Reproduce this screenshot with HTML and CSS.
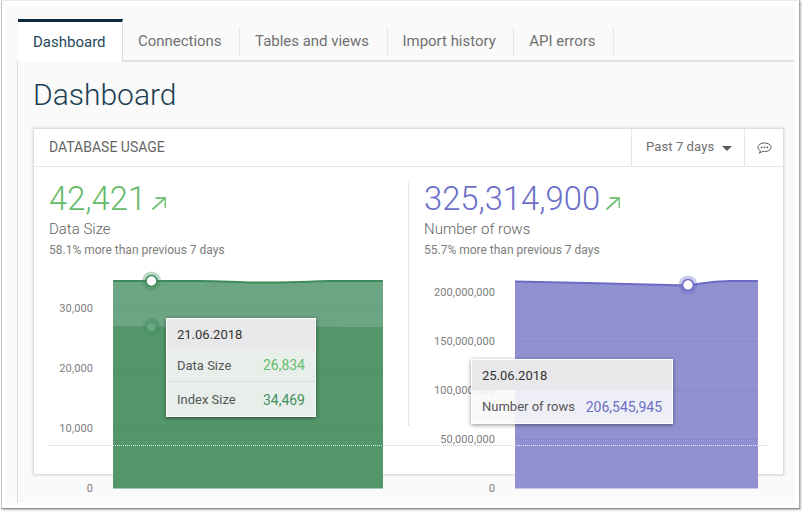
FILE: index.html
```html
<!DOCTYPE html>
<html lang="en">
<head>
<meta charset="utf-8">
<title>Dashboard</title>
<link rel="stylesheet" href="styles.css">
</head>
<body>
<div class="window">
  <div class="panel">
    <div class="content">
      <nav class="tabs">
        <a class="tab tab-active">Dashboard</a>
        <a class="tab">Connections</a>
        <a class="tab">Tables and views</a>
        <a class="tab">Import history</a>
        <a class="tab">API errors</a>
      </nav>
      <h1 class="title">Dashboard</h1>
      <section class="card">
        <header class="card-head">
          <h2 class="card-title">DATABASE USAGE</h2>
          <button class="range">Past 7 days<span class="caret"></span></button>
          <button class="chat">
            <svg width="15" height="13" viewBox="0 0 15 13">
              <path class="chat-line" d="M7.500 1c3.600 0 6.500 1.900 6.500 4.300s-2.900 4.300-6.500 4.300c-.8 0-1.500-.1-2.200-.2-.8.8-1.800 1.400-3 1.700.6-.7.9-1.400 1-2.300C2 7.900 1 6.700 1 5.300 1 2.900 3.900 1 7.500 1z"/>
              <circle class="chat-dot" cx="4.700" cy="5.300" r=".9"/>
              <circle class="chat-dot" cx="7.500" cy="5.300" r=".9"/>
              <circle class="chat-dot" cx="10.300" cy="5.300" r=".9"/>
            </svg>
          </button>
        </header>
        <div class="card-body">
          <div class="crosshair"></div>
          <div class="col col-left">
            <div class="stat stat-green">42,421<svg class="trend" width="14" height="13" viewBox="0 0 14 13"><path d="M.5 12.500L12.500 1.500M3.500 1H13.500V11"/></svg></div>
            <div class="stat-label">Data Size</div>
            <div class="stat-note">58.1% more than previous 7 days</div>
            <div class="chart">
              <svg class="plot" width="359" height="230" viewBox="49 265 359 230">
                <text class="tick" x="93" y="312">30,000</text>
                <text class="tick" x="93" y="372">20,000</text>
                <text class="tick" x="93" y="432">10,000</text>
                <text class="tick" x="93" y="492">0</text>
                <path class="area-upper" d="M113 281H200C225 281 235 282.500 260 282.500S300 282 330 281H383V327H113Z"/>
                <path class="area-lower" d="M113 326L150 326.500C175 327 195 328 225 328S300 326 320 326.500S360 327 383 327V488.500H113Z"/>
                <path class="grid-green" d="M113 308.500H383M113 368.500H383M113 428.500H383"/>
                <path class="line-green" d="M113 281H200C225 281 235 282.500 260 282.500S300 282 330 281H383"/>
                <path class="line-white" d="M113 445.500H383"/>
                <circle class="halo-green" cx="151.500" cy="281" r="9.500"/>
                <circle class="dot-green" cx="151.500" cy="281" r="5.500"/>
                <circle class="halo-green" cx="151.500" cy="327" r="9"/>
                <circle class="dot-soft" cx="151.500" cy="327" r="5"/>
              </svg>
              <div class="tip tip-left">
                <div class="tip-head">21.06.2018</div>
                <div class="tip-row tip-divided"><span>Data Size</span><b class="val-light">26,834</b></div>
                <div class="tip-row tip-last"><span>Index Size</span><b class="val-dark">34,469</b></div>
              </div>
            </div>
          </div>
          <div class="col col-right">
            <div class="stat stat-purple">325,314,900<svg class="trend" width="14" height="13" viewBox="0 0 14 13"><path d="M.5 12.500L12.500 1.500M3.500 1H13.500V11"/></svg></div>
            <div class="stat-label">Number of rows</div>
            <div class="stat-note">55.7% more than previous 7 days</div>
            <div class="chart">
              <svg class="plot" width="360" height="230" viewBox="424 265 360 230">
                <text class="tick" x="495" y="296">200,000,000</text>
                <text class="tick" x="495" y="345">150,000,000</text>
                <text class="tick" x="495" y="394">100,000,000</text>
                <text class="tick" x="495" y="443">50,000,000</text>
                <text class="tick" x="495" y="492">0</text>
                <path class="area-purple" d="M515 281.500C570 282.500 640 284 688 285.500C705 283 710 281 730 281H758V488.500H515Z"/>
                <path class="grid-purple" d="M515 341.500H758M515 390.500H758M515 439.500H758"/>
                <path class="line-purple" d="M515 281.500C570 282.500 640 284 688 285.500C705 283 710 281 730 281H758"/>
                <path class="line-white" d="M515 445.500H758"/>
                <circle class="halo-purple" cx="688" cy="285" r="9.500"/>
                <circle class="dot-purple" cx="688" cy="285" r="5.500"/>
              </svg>
              <div class="tip tip-right">
                <div class="tip-head">25.06.2018</div>
                <div class="tip-row"><span>Number of rows</span><b class="val-purple">206,545,945</b></div>
              </div>
            </div>
          </div>
        </div>
      </section>
    </div>
  </div>
</div>
</body>
</html>
```

FILE: styles.css
```css
* { box-sizing: border-box; }
html, body { margin: 0; height: 100%; overflow: hidden; background: #fff; }
body { font-family: Roboto, "Liberation Sans", sans-serif; }

.window {
  width: 799px;
  height: 509px;
  margin: 0 0 0 1px;
  padding: 5px;
  background: #fff;
  border: 1px solid #d8d8d8;
  border-top-color: #e8e8e8;
  border-left-color: #c6c6c6;
  border-right-color: #a8a8a8;
  border-bottom-color: #8c8c8c;
  box-shadow: 1px 1px 2px rgba(0, 0, 0, .3);
}
.panel {
  height: 497px;
  padding: 13px 0 0 10px;
  background: #fafafa;
}
.content {
  position: relative;
  height: 484px;
}
.content::before {
  content: "";
  position: absolute;
  left: 0;
  top: 42px;
  bottom: 0;
  width: 1px;
  background: #dcdcdc;
}

.tabs {
  display: flex;
  align-items: center;
  height: 43px;
  border-bottom: 2px solid #e2e2e2;
}
.tab {
  display: flex;
  align-items: center;
  height: 29px;
  margin-top: 3px;
  padding: 0 17.5px 0 15px;
  border-right: 1px solid #e6e6e6;
  font-size: 14.960px;
  color: #707070;
  white-space: nowrap;
}
.tab-active {
  height: 43px;
  margin: 0 0 -2px 1px;
  padding: 0 17px 0 15px;
  width: 105px;
  background: #fff;
  border-top: 3px solid #0e2b3e;
  border-right: 1px solid #dcdcdc;
  font-size: 15px;
  color: #25475c;
}

.title {
  margin: 0;
  padding: 13px 0 0 16px;
  height: 66px;
  font-size: 30px;
  line-height: 40px;
  font-weight: 300;
  color: #1c3f54;
}

.card {
  width: 751px;
  height: 347px;
  margin-left: 16px;
  background: #fff;
  border: 1px solid #dedede;
  box-shadow: 0 0 3px rgba(0, 0, 0, .16);
}
.card-head {
  display: flex;
  align-items: stretch;
  height: 38px;
  border-bottom: 1px solid #e6e6e6;
}
.card-title {
  flex: 1;
  margin: 0;
  padding-left: 15px;
  font-size: 14px;
  font-weight: 400;
  line-height: 36px;
  color: #666;
}
.range, .chat {
  display: flex;
  align-items: center;
  padding: 0;
  background: none;
  border: 0;
  border-left: 1px solid #e6e6e6;
  font-family: inherit;
  color: #6e6e6e;
}
.range {
  width: 113px;
  padding: 0 0 2px 14px;
  font-size: 13px;
  letter-spacing: .1px;
}
.caret {
  margin: 3px 0 0 8px;
  border: 5px solid transparent;
  border-top-color: #5c5c5c;
  border-bottom: 0;
}
.chat {
  width: 39px;
  justify-content: center;
  padding-top: 1px;
}
.chat-line { fill: none; stroke: #5a5a5a; stroke-width: 1; }
.chat-dot { fill: #5a5a5a; }

.card-body {
  position: relative;
  display: flex;
  padding: 14px 0 0 15px;
}
.crosshair {
  position: absolute;
  left: 15px;
  top: 278px;
  width: 719px;
  border-top: 1px dotted #c8c8c8;
}
.col { position: relative; }
.col-left { width: 359px; }
.col-right { padding-left: 16px; }
.col-right::before {
  content: "";
  position: absolute;
  left: 0;
  top: 1px;
  height: 243px;
  border-left: 1px dotted #cfcfcf;
}

.stat {
  display: flex;
  align-items: center;
  height: 36px;
  font-size: 32.750px;
  line-height: 36px;
  font-weight: 300;
}
.stat-green { color: #66bb6a; }
.stat-purple { color: #6b6fc8; }
.trend { margin: 9px 0 0 6px; }
.trend path { fill: none; stroke: #7cc47f; stroke-width: 2; }
.stat-label {
  margin-top: 2px;
  height: 20px;
  font-size: 15px;
  line-height: 20px;
  font-weight: 300;
  color: #5f5f5f;
}
.stat-note {
  height: 18px;
  margin-top: 2px;
  font-size: 12px;
  line-height: 18px;
  color: #7d7d7d;
}

.chart { position: relative; height: 230px; margin-top: 6px; }
.plot { display: block; overflow: visible; }
.tick {
  font-family: Roboto, "Liberation Sans", sans-serif;
  font-size: 11px;
  letter-spacing: .1px;
  fill: #7d7d7d;
  text-anchor: end;
}
.area-upper { fill: #6ca583; }
.area-lower { fill: #52966a; }
.area-purple { fill: #9191d2; }
.grid-green { fill: none; stroke: rgba(40, 110, 70, .1); }
.grid-purple { fill: none; stroke: rgba(80, 80, 170, .14); }
.line-green { fill: none; stroke: #3f8b5b; stroke-width: 2; }
.line-purple { fill: none; stroke: #6b6bc6; stroke-width: 2; }
.line-white { fill: none; stroke: #fff; stroke-dasharray: 1 1; opacity: .85; }
.halo-green { fill: #3f8b5b; opacity: .35; }
.dot-green { fill: #fff; stroke: #3f8b5b; stroke-width: 1.500; }
.dot-soft { fill: #6ca583; stroke: #45915f; stroke-width: 1; }
.halo-purple { fill: #6b6bc6; opacity: .35; }
.dot-purple { fill: #fff; stroke: #6b6bc6; stroke-width: 1.500; }

.tip {
  position: absolute;
  background: rgba(248, 248, 250, .9);
  border: 1px solid #fff;
  box-shadow: 0 1px 4px rgba(0, 0, 0, .45);
  font-size: 13px;
  color: #555;
}
.tip-left { left: 117px; top: 53px; width: 150px; height: 99px; }
.tip-right { left: 47px; top: 94px; width: 202px; height: 65px; }
.tip-head {
  height: 30px;
  padding: 2px 0 0 10px;
  background: rgba(232, 232, 234, .98);
  line-height: 28px;
  color: #333;
}
.tip-row {
  display: flex;
  justify-content: space-between;
  align-items: center;
  height: 33px;
  padding: 0 10px;
}
.tip-last { height: 35px; }
.tip-divided { border-bottom: 1px solid #d8dbd9; }
.tip-row b { font-size: 14px; font-weight: 400; }
.val-light { color: #66bb6a; }
.val-dark { color: #45915f; }
.val-purple { color: #6b6fc8; }
```
